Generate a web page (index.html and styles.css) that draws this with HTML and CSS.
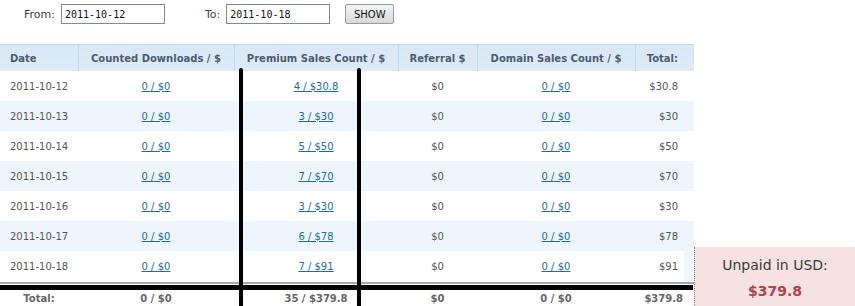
FILE: index.html
```html
<!DOCTYPE html>
<html>
<head>
<meta charset="utf-8">
<link rel="stylesheet" href="styles.css">
</head>
<body>
<div class="page">
  <form class="filter">
    <label class="lbl from">From:</label>
    <input class="date" type="text" value="2011-10-12">
    <label class="lbl to">To:</label>
    <input class="date" type="text" value="2011-10-18">
    <button class="show" type="button">SHOW</button>
  </form>
  <div class="report">
    <table class="stats">
      <colgroup>
        <col class="w-date">
        <col class="w-dl">
        <col class="w-prem">
        <col class="w-ref">
        <col class="w-dom">
        <col class="w-tot">
      </colgroup>
      <thead>
        <tr>
          <th class="c-date">Date</th>
          <th>Counted Downloads / $</th>
          <th>Premium Sales Count / $</th>
          <th>Referral $</th>
          <th>Domain Sales Count / $</th>
          <th class="c-tot">Total:</th>
        </tr>
      </thead>
      <tbody>
        <tr><td class="c-date">2011-10-12</td><td><a href="#">0 / $0</a></td><td><a href="#">4 / $30.8</a></td><td>$0</td><td><a href="#">0 / $0</a></td><td class="c-tot">$30.8</td></tr>
        <tr class="alt"><td class="c-date">2011-10-13</td><td><a href="#">0 / $0</a></td><td><a href="#">3 / $30</a></td><td>$0</td><td><a href="#">0 / $0</a></td><td class="c-tot">$30</td></tr>
        <tr><td class="c-date">2011-10-14</td><td><a href="#">0 / $0</a></td><td><a href="#">5 / $50</a></td><td>$0</td><td><a href="#">0 / $0</a></td><td class="c-tot">$50</td></tr>
        <tr class="alt"><td class="c-date">2011-10-15</td><td><a href="#">0 / $0</a></td><td><a href="#">7 / $70</a></td><td>$0</td><td><a href="#">0 / $0</a></td><td class="c-tot">$70</td></tr>
        <tr><td class="c-date">2011-10-16</td><td><a href="#">0 / $0</a></td><td><a href="#">3 / $30</a></td><td>$0</td><td><a href="#">0 / $0</a></td><td class="c-tot">$30</td></tr>
        <tr class="alt"><td class="c-date">2011-10-17</td><td><a href="#">0 / $0</a></td><td><a href="#">6 / $78</a></td><td>$0</td><td><a href="#">0 / $0</a></td><td class="c-tot">$78</td></tr>
        <tr class="last"><td class="c-date">2011-10-18</td><td><a href="#">0 / $0</a></td><td><a href="#">7 / $91</a></td><td>$0</td><td><a href="#">0 / $0</a></td><td class="c-tot">$91</td></tr>
      </tbody>
      <tfoot>
        <tr>
          <td class="f-label">Total:</td>
          <td>0 / $0</td>
          <td>35 / $379.8</td>
          <td>$0</td>
          <td>0 / $0</td>
          <td class="f-sum">$379.8</td>
        </tr>
      </tfoot>
    </table>
    <div class="unpaid">
      <div class="unpaid-label">Unpaid in USD:</div>
      <div class="unpaid-value">$379.8</div>
    </div>
    <div class="mark mark-v mark-v1"></div>
    <div class="mark mark-v mark-v2"></div>
    <div class="mark mark-h"></div>
  </div>
</div>
</body>
</html>
```

FILE: styles.css
```css
html, body {
  margin: 0;
  padding: 0;
  background: #fff;
  overflow: hidden;
}
body {
  font-family: "DejaVu Sans", Verdana, sans-serif;
  font-size: 10px;
  color: #555;
}
.page {
  width: 855px;
  height: 306px;
  overflow: hidden;
}
.filter {
  display: flex;
  align-items: center;
  height: 28px;
  margin: 0;
  padding: 0 0 0 24px;
}
.lbl {
  font-size: 11px;
  color: #444;
  margin-right: 6px;
}
.lbl.to {
  margin-left: 40px;
  margin-right: 6px;
}
.date {
  box-sizing: border-box;
  width: 104px;
  height: 20px;
  border: 1px solid #7f8a96;
  padding: 0 3px;
  font-family: "DejaVu Sans Mono", monospace;
  font-size: 10px;
  color: #111;
  background: #fff;
}
.show {
  box-sizing: border-box;
  width: 49px;
  height: 20px;
  margin-left: 15px;
  border: 1px solid #9a9a9a;
  border-radius: 2px;
  background: linear-gradient(#f6f6f6, #d8d8d8);
  font-family: "DejaVu Sans", sans-serif;
  font-size: 10px;
  color: #111;
  padding: 0;
}
.report {
  position: relative;
  display: flex;
  align-items: flex-end;
  margin-top: 16px;
}
.stats {
  width: 694px;
  border-collapse: collapse;
  table-layout: fixed;
  flex: none;
}
.w-date { width: 78px; }
.w-dl { width: 156px; }
.w-prem { width: 164px; }
.w-ref { width: 79px; }
.w-dom { width: 158px; }
.w-tot { width: 59px; }
.stats th, .stats td {
  padding: 0;
  white-space: nowrap;
  overflow: hidden;
  text-align: center;
}
.stats thead th {
  height: 26px;
  background: linear-gradient(#d9e7f6, #dfebf8);
  border-top: 1px solid #c3d7ec;
  border-left: 1px solid #c6d8ec;
  color: #4b5d72;
  font-weight: bold;
  font-size: 10px;
}
.stats thead th:first-child {
  border-left: none;
}
.stats tbody td {
  height: 30px;
  color: #555;
}
.stats tbody tr.alt td {
  background: #eef5fd;
}
.stats tbody tr.last td {
  border-bottom: 2px solid #a8a8a8;
  height: 31px;
}
.stats tbody tr.last td.c-tot {
  background: linear-gradient(to right, #fff 0, #fff 49px, #eef5fd 49px);
}
.stats a {
  color: #1e6c9a;
  text-decoration: underline;
}
.stats .c-date {
  text-align: left;
  padding-left: 10px;
}
.stats .c-tot {
  text-align: right;
  padding-right: 16px;
}
.stats tfoot td {
  height: 24px;
  padding-top: 2px;
  font-weight: bold;
  color: #666;
}
.stats tfoot td.f-sum {
  text-align: right;
  padding-right: 11px;
}
.unpaid {
  flex: none;
  box-sizing: border-box;
  width: 161px;
  height: 66px;
  margin-bottom: -3px;
  background: #f6e2e2;
  border-left: 1px dotted #9a7c7c;
  text-align: center;
  padding-top: 9px;
}
.unpaid-label {
  font-size: 14px;
  color: #3a3a3a;
  line-height: 18px;
}
.unpaid-value {
  font-size: 14px;
  font-weight: bold;
  color: #b3414b;
  line-height: 18px;
  margin-top: 8px;
}
.mark {
  position: absolute;
  background: #000;
}
.mark-v {
  top: 24px;
  width: 4px;
  height: 250px;
  border-radius: 2px;
}
.mark-v1 { left: 239px; }
.mark-v2 { left: 357px; }
.mark-h {
  left: 0;
  top: 241px;
  width: 693px;
  height: 5px;
}
```
